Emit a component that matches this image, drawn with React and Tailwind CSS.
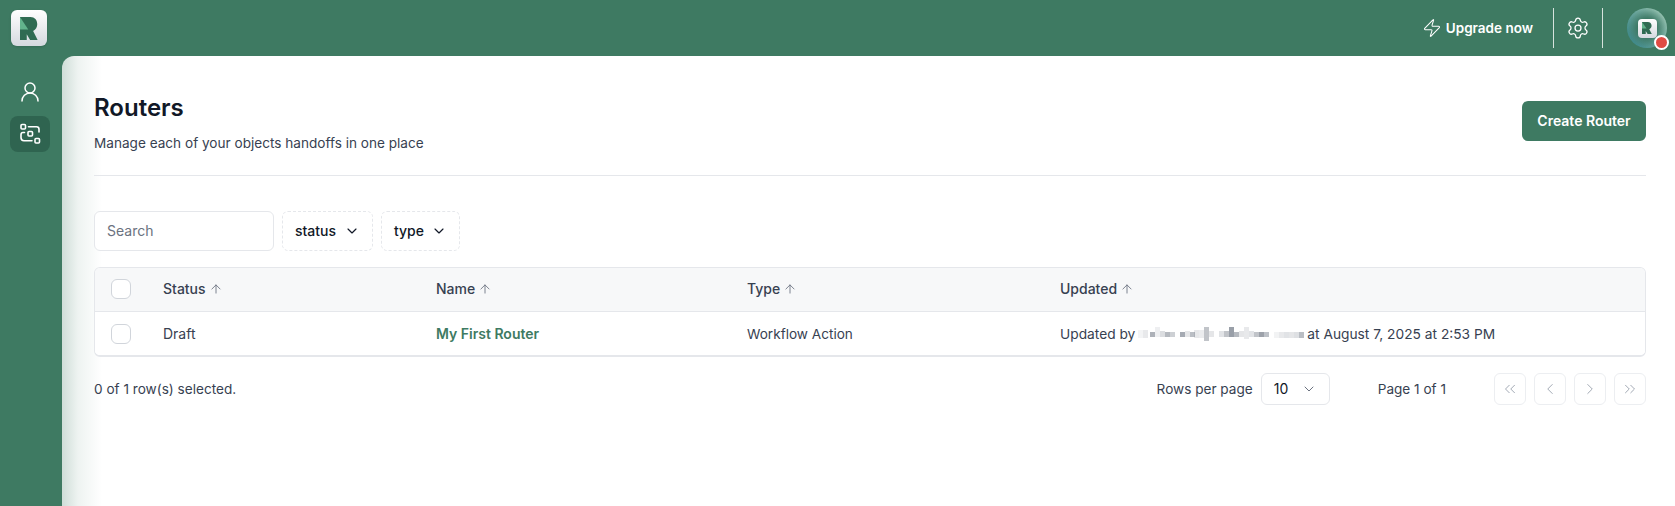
import React from "react";
import {
  ArrowUp,
  ChevronDown,
  ChevronLeft,
  ChevronRight,
  ChevronsLeft,
  ChevronsRight,
  Settings,
  UserRound,
  Zap,
} from "lucide-react";

const font = "font-['Inter','Liberation_Sans',sans-serif]";

function Logo({ width = 18, height = 23 }) {
  return (
    <svg width={width} height={height} viewBox="0 0 24 24" preserveAspectRatio="none">
      <path d="M0 0H14C19.5 0 23 3 23 7.5C23 10.5 21 13 17.5 14.5L23.5 24H13.5L9 18V24H0Z" fill="#2f6b52" />
      <path d="M0 0V13H11Z" fill="#62b38c" />
    </svg>
  );
}

function RouterIcon() {
  return (
    <svg width="24" height="24" viewBox="0 0 24 24" fill="none" stroke="currentColor" strokeWidth="1.6" strokeLinecap="round" strokeLinejoin="round">
      <rect x="3" y="2.5" width="4.5" height="4.5" rx="1" />
      <rect x="10" y="9.5" width="4.5" height="4.5" rx="1" />
      <rect x="17" y="16.5" width="4.5" height="4.5" rx="1" />
      <path d="M10.5 4.7H18.5C20 4.7 21 5.7 21 7.2V10" />
      <path d="M6.5 10.5H5C3.6 10.5 3 11.5 3 12.7V15.5C3 17.4 4 18.7 6 18.7H14" />
    </svg>
  );
}

function Checkbox() {
  return <div className="h-5 w-5 rounded-md border border-[#d1d5db] bg-white" />;
}

function SortHead({ label, className }) {
  return (
    <div className={`flex items-center gap-1 ${className}`}>
      <span className="font-medium">{label}</span>
      <ArrowUp size={14} strokeWidth={1.5} className="-ml-px text-[#6b7280]" />
    </div>
  );
}

function FilterButton({ label, className }) {
  return (
    <button className={`flex h-10 items-center justify-between rounded-md border border-dashed border-[#e5e7eb] px-3 text-sm font-medium text-[#111827] ${className}`}>
      {label}
      <ChevronDown size={16} strokeWidth={1.75} />
    </button>
  );
}

function PageButton({ children }) {
  return (
    <button className="flex h-8 w-8 items-center justify-center rounded-md border border-[#eceef1] text-[#9ca3af]">
      {children}
    </button>
  );
}

// pixelated mosaic over the user's email: x, y, h, opacity
const mosaic = [
  [0, 3, 8, 0.07], [5, 3, 8, 0.14], [12, 5, 5, 0.5], [17, 0, 10, 0.1], [22, 4, 6, 0.22], [27, 5, 5, 0.45],
  [32, 5, 5, 0.3], [42, 5, 5, 0.55], [47, 4, 6, 0.16], [52, 5, 5, 0.42], [56, 3, 8, 0.15], [61, 3, 8, 0.12],
  [66, 0, 14, 0.38], [71, 4, 6, 0.16], [81, 4, 6, 0.18], [86, 4, 6, 0.38], [91, 0, 10, 0.62], [96, 5, 5, 0.45],
  [101, 4, 6, 0.16], [106, 0, 12, 0.14], [111, 4, 6, 0.18], [116, 5, 5, 0.38], [121, 5, 5, 0.6], [126, 5, 5, 0.4],
  [136, 5, 6, 0.08], [141, 5, 6, 0.14], [146, 5, 6, 0.18], [151, 5, 6, 0.16], [156, 5, 6, 0.2], [161, 5, 6, 0.42],
];

function Blurred() {
  return (
    <svg width="166" height="14" viewBox="0 0 166 14" className="ml-[3px] mr-[3px]">
      {mosaic.map(([x, y, h, o], i) => (
        <rect key={i} x={x} y={y} width="5" height={h} fill="#5b6472" opacity={o} />
      ))}
    </svg>
  );
}

export default function App() {
  return (
    <div className={`flex h-[506px] w-[1675px] flex-col overflow-hidden bg-[#3e7a62] ${font}`}>
      <header className="flex h-14 shrink-0 items-center">
        <div className="ml-[11px] flex h-9 w-9 items-center justify-center rounded-md bg-gradient-to-b from-white to-[#d5d9df] shadow-sm">
          <Logo />
        </div>
        <button className="ml-auto flex items-center gap-1 text-[13.5px] font-semibold text-white">
          <Zap size={20} strokeWidth={1.25} />
          Upgrade now
        </button>
        <div className="ml-5 h-10 w-px bg-[#d6e3dd]" />
        <Settings size={24} strokeWidth={1.25} className="ml-3 text-white" />
        <div className="ml-3 h-10 w-px bg-[#d6e3dd]" />
        <div className="relative ml-6 mr-2 flex h-10 w-10 items-center justify-center rounded-full bg-[radial-gradient(circle,#3a7560_30%,transparent_72%),linear-gradient(50deg,#2f8087,#a9cfba)]">
          <div className="flex h-[19px] w-[19px] items-center justify-center rounded bg-gradient-to-b from-white to-[#d5d9df]">
            <Logo width={10} height={12} />
          </div>
          <div className="absolute -bottom-0.5 -right-0.5 h-[15px] w-[15px] rounded-full border-2 border-white bg-[#e04b43]" />
        </div>
      </header>

      <div className="flex min-h-0 flex-1">
        <nav className="flex w-[62px] shrink-0 flex-col items-center pr-[2px] pt-[18px] text-white">
          <div className="flex h-9 w-10 items-center justify-center">
            <UserRound size={24} strokeWidth={1.5} />
          </div>
          <div className="mt-[6px] flex h-9 w-10 items-center justify-center rounded-lg bg-[#2f6450]">
            <RouterIcon />
          </div>
        </nav>

        <main className="flex-1 rounded-tl-xl bg-[linear-gradient(90deg,#cfded8_0,#eef3f1_16px,#fff_40px)] pl-8 pr-[29px] pt-9 text-[#374151]">
          <div className="flex items-start justify-between border-b border-[#e5e7eb] pb-[22px]">
            <div>
              <h1 className="text-2xl font-semibold leading-8 text-[#111827]">Routers</h1>
              <p className="mt-[9px] text-[13.6px] leading-5">Manage each of your objects handoffs in one place</p>
            </div>
            <button className="mt-[9px] h-10 w-[124px] rounded-md bg-[#3e7a62] text-sm font-semibold text-white">
              Create Router
            </button>
          </div>

          <div className="mt-[35px] flex gap-2">
            <div className="flex h-10 w-[180px] items-center rounded-md border border-[#e5e7eb] bg-white px-3 text-sm text-[#6b7280]">
              Search
            </div>
            <FilterButton label="status" className="w-[91px]" />
            <FilterButton label="type" className="w-[79px]" />
          </div>

          <div className="mt-4 overflow-hidden rounded-md border border-b-2 border-[#e5e7eb] text-sm">
            <div className="flex h-[44px] items-center border-b border-[#e5e7eb] bg-[#f7f8f9] pb-[2px]">
              <div className="w-[68px] pl-4"><Checkbox /></div>
              <SortHead label="Status" className="w-[273px]" />
              <SortHead label="Name" className="w-[311px]" />
              <SortHead label="Type" className="w-[313px]" />
              <SortHead label="Updated" />
            </div>
            <div className="flex h-[43px] items-center bg-white">
              <div className="w-[68px] pl-4"><Checkbox /></div>
              <div className="w-[273px]">Draft</div>
              <div className="w-[311px] font-semibold text-[#3e7a62]">My First Router</div>
              <div className="w-[313px] text-[13.6px] leading-5">Workflow Action</div>
              <div className="flex items-center text-[13.75px] leading-5">
                Updated by
                <Blurred />
                at August 7, 2025 at 2:53 PM
              </div>
            </div>
          </div>

          <div className="mt-4 flex items-center text-[13.6px]">
            <span>0 of 1 row(s) selected.</span>
            <span className="ml-auto">Rows per page</span>
            <div className="ml-2 flex h-8 w-[69px] items-center justify-between rounded-md border border-[#e5e7eb] px-3 text-sm text-[#111827]">
              10
              <ChevronDown size={16} strokeWidth={1.5} className="text-[#6b7280]" />
            </div>
            <span className="mx-12">Page 1 of 1</span>
            <div className="flex gap-2">
              <PageButton><ChevronsLeft size={18} strokeWidth={1.25} /></PageButton>
              <PageButton><ChevronLeft size={18} strokeWidth={1.25} /></PageButton>
              <PageButton><ChevronRight size={18} strokeWidth={1.25} /></PageButton>
              <PageButton><ChevronsRight size={18} strokeWidth={1.25} /></PageButton>
            </div>
          </div>
        </main>
      </div>
    </div>
  );
}
